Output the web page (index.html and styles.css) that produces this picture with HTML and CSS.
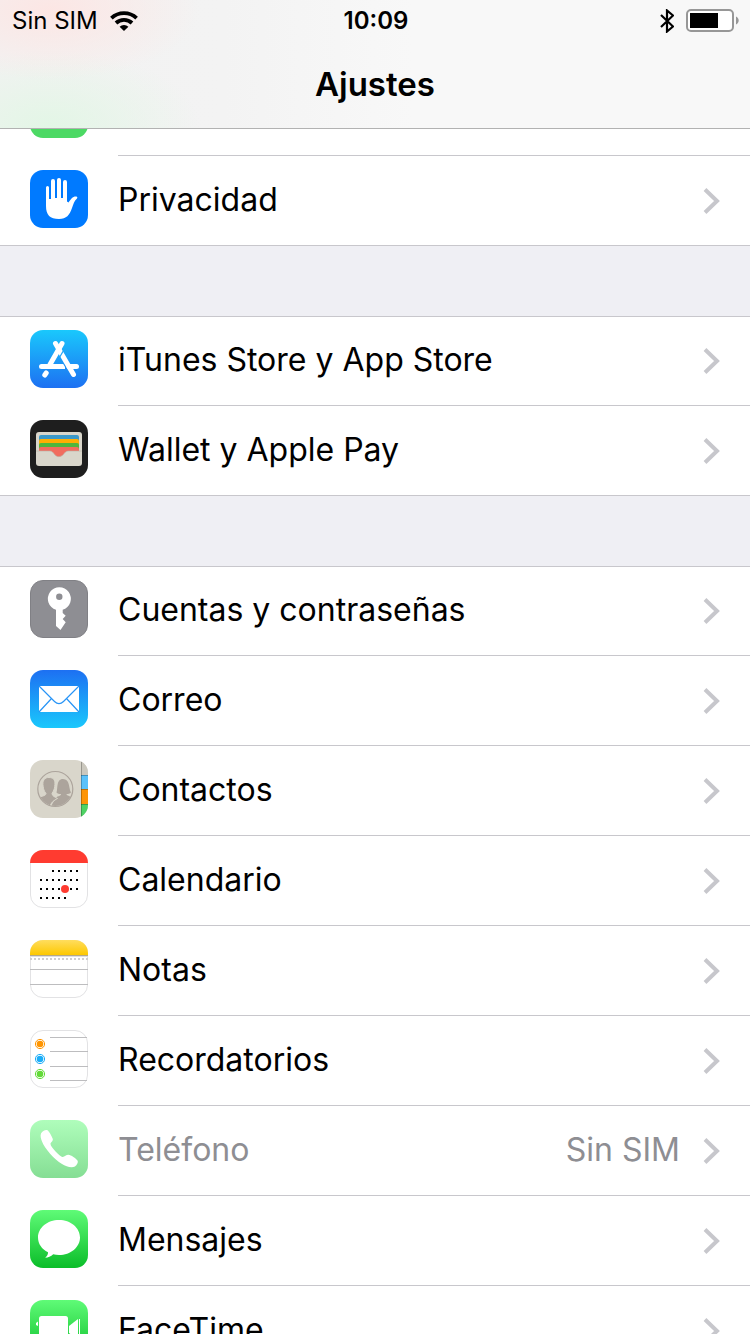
FILE: index.html
```html
<!DOCTYPE html>
<html lang="es">
  <head>
    <meta charset="UTF-8" />
    <meta name="viewport" content="width=device-width, initial-scale=1.0" />
    <title>Ajustes</title>
    <link rel="stylesheet" href="styles.css">
  </head>
  <body>
    <!-- shared shapes -->
    <svg class="defs" aria-hidden="true">
      <defs>
        <symbol id="chevron" viewBox="0 0 18 28">
          <path d="M2 2.5 L14 14 L2 25.5" fill="none" stroke="#c7c7cc" stroke-width="4" />
        </symbol>
        <linearGradient id="blueDown" x1="0" y1="0" x2="0" y2="1">
          <stop offset="0" stop-color="#1ac8fc" />
          <stop offset="1" stop-color="#1d70f2" />
        </linearGradient>
        <linearGradient id="blueUp" x1="0" y1="1" x2="0" y2="0">
          <stop offset="0" stop-color="#1ac8fc" />
          <stop offset="1" stop-color="#1d70f2" />
        </linearGradient>
        <linearGradient id="green" x1="0" y1="0" x2="0" y2="1">
          <stop offset="0" stop-color="#5ffb77" />
          <stop offset="1" stop-color="#0bbd29" />
        </linearGradient>
        <linearGradient id="paleGreen" x1="0" y1="0" x2="0" y2="1">
          <stop offset="0" stop-color="#affdbb" />
          <stop offset="1" stop-color="#85de94" />
        </linearGradient>
        <linearGradient id="yellow" x1="0" y1="0" x2="0" y2="1">
          <stop offset="0" stop-color="#ffdd5e" />
          <stop offset="1" stop-color="#fdc800" />
        </linearGradient>
        <clipPath id="tile"><rect width="58" height="58" rx="13" /></clipPath>
      </defs>
    </svg>

    <div class="screen">
      <header class="header">
        <div class="status">
          <div class="status-left">
            <span>Sin SIM</span>
            <svg class="wifi" viewBox="0 0 28 20">
              <g fill="none" stroke="#000" stroke-width="3.8">
                <path d="M1.4 7.2 A18.4 18.4 0 0 1 26.6 7.2" />
                <path d="M6 12 A11.6 11.6 0 0 1 22 12" />
              </g>
              <path d="M9.6 15.8 A6.2 6.2 0 0 1 18.4 15.8 L14 20 Z" />
            </svg>
          </div>
          <div class="status-time">10:09</div>
          <div class="status-right">
            <svg class="bluetooth" viewBox="0 0 14 24">
              <path d="M1 6 L13 17.5 L7 22.5 V1.5 L13 6.5 L1 18" fill="none" stroke="#000" stroke-width="2.2" />
            </svg>
            <svg class="battery" viewBox="0 0 54 24">
              <rect x="1" y="1" width="46" height="21" rx="4" fill="#fff" stroke="#979797" stroke-width="2" />
              <rect x="4" y="4" width="28" height="15" />
              <path d="M50 7.5 C53.6 9 53.6 14 50 15.5 Z" fill="#979797" />
            </svg>
          </div>
        </div>
        <h1 class="title">Ajustes</h1>
      </header>

      <main class="list">
        <section class="group">
          <div class="row">
            <svg class="icon" viewBox="0 0 58 58"><rect width="58" height="58" rx="13" fill="#4cd964" /></svg>
            <div class="cell"></div>
          </div>
          <a class="row" href="#">
            <svg class="icon" viewBox="0 0 58 58">
              <rect width="58" height="58" rx="13" fill="#007aff" />
              <path fill="#fff" d="M16 17.5 Q16 16 17.5 16 Q19 16 19 17.5 V29 H21 V11 Q21 9 23 9 Q25 9 25 11 V28 H27 V10 Q27 8 29 8 Q31 8 31 10 V28 H33 V12 Q33 10 35 10 Q37 10 37 12 V31.5 L38.5 32.5 C41 29 42.5 26.2 46.5 26.5 Q48 27 47 28.5 C44 31 43.5 34 42 38 C39.5 45 36.5 49 29 49 C20 49 16 45 16 36 Z" />
            </svg>
            <div class="cell"><span class="label">Privacidad</span><svg class="chevron"><use href="#chevron" /></svg></div>
          </a>
        </section>

        <section class="group">
          <a class="row" href="#">
            <svg class="icon" viewBox="0 0 58 58">
              <rect width="58" height="58" rx="13" fill="url(#blueDown)" />
              <g fill="none" stroke="#fff" stroke-width="5" stroke-linecap="round">
                <path d="M25.5 13.5 L43.5 44.5" />
                <path d="M39 36.5 H46.5" />
                <path d="M16.2 43 L14.8 45" />
              </g>
              <path d="M33.5 20.5 L29.5 27.5" fill="none" stroke="#1fa5f9" stroke-width="1.2" />
              <g fill="none" stroke="#fff" stroke-width="5" stroke-linecap="round">
                <path d="M32 13.5 L20 34.5" />
                <path d="M11.5 36.5 H30" />
              </g>
              <path d="M30 34 H33.2 L35 37 V39 H30 Z" fill="#fff" />
            </svg>
            <div class="cell"><span class="label">iTunes Store y App Store</span><svg class="chevron"><use href="#chevron" /></svg></div>
          </a>
          <a class="row" href="#">
            <svg class="icon" viewBox="0 0 58 58">
              <rect width="58" height="58" rx="13" fill="#1e1e1e" />
              <rect x="6" y="12" width="46" height="34" rx="3" fill="#d9d6cb" />
              <path d="M9 31 V17 Q9 15 11 15 H47 Q49 15 49 17 V31 Z" fill="#3b99c9" />
              <path d="M9 31 V21 Q9 19 11 19 H47 Q49 19 49 21 V31 Z" fill="#ffae03" />
              <path d="M9 31 V25 Q9 23 11 23 H47 Q49 23 49 25 V31 Z" fill="#4fb63c" />
              <path d="M9 31 V29 Q9 27 11 27 H47 Q49 27 49 29 V31 H38 C34 31 34 36.7 29 36.7 C24 36.7 24 31 20 31 Z" fill="#f16c5e" />
              <path d="M6 31 H20 C24 31 24 36.7 29 36.7 C34 36.7 34 31 38 31 H52" fill="none" stroke="#b9b2a6" stroke-width="0.6" />
            </svg>
            <div class="cell"><span class="label">Wallet y Apple Pay</span><svg class="chevron"><use href="#chevron" /></svg></div>
          </a>
        </section>

        <section class="group">
          <a class="row" href="#">
            <svg class="icon" viewBox="0 0 58 58">
              <rect x="0.5" y="0.5" width="57" height="57" rx="12.5" fill="#8e8e93" stroke="#808085" />
              <path fill="#fff" fill-rule="evenodd" d="M26 29.8 A11.5 11.5 0 1 1 32.7 29.8 V33 L35.7 35.7 L32.7 39 L35.7 42.3 L30.5 50 L26 46 Z M29.3 13.5 A3.2 3.2 0 1 0 29.3 19.9 A3.2 3.2 0 1 0 29.3 13.5 Z" />
            </svg>
            <div class="cell"><span class="label">Cuentas y contraseñas</span><svg class="chevron"><use href="#chevron" /></svg></div>
          </a>
          <a class="row" href="#">
            <svg class="icon" viewBox="0 0 58 58">
              <rect width="58" height="58" rx="13" fill="url(#blueUp)" />
              <rect x="9" y="16" width="40" height="26" fill="#fff" />
              <g fill="none" stroke="#2794f6" stroke-width="1.2">
                <path d="M9 16 L24.5 31.5 Q29 36 33.5 31.5 L49 16" />
                <path d="M9 42 L21.5 28.5 M49 42 L36.5 28.5" />
              </g>
            </svg>
            <div class="cell"><span class="label">Correo</span><svg class="chevron"><use href="#chevron" /></svg></div>
          </a>
          <a class="row" href="#">
            <svg class="icon" viewBox="0 0 58 58">
              <clipPath id="face"><circle cx="25.3" cy="29" r="17" /></clipPath>
              <g clip-path="url(#tile)">
                <rect width="58" height="58" fill="#d9d6cb" />
                <rect x="51" width="7" height="15" fill="#cbc8be" />
                <rect x="51" y="15" width="7" height="14" fill="#5ac1fa" />
                <rect x="51" y="29" width="7" height="15" fill="#fd9507" />
                <rect x="51" y="44" width="7" height="14" fill="#4ed264" />
                <path d="M51.5 0 V58 M51 15.5 H58 M51 29.5 H58 M51 44.5 H58" stroke="#000" stroke-opacity="0.25" fill="none" />
              </g>
              <g clip-path="url(#face)">
                <path fill="#aca49c" d="M26 37.5 C28 36 31 36 31 34 C29 34 27.5 33.5 26.5 32.5 C28 29 26 19 33 19 C40 19 38.5 28 41 32.5 C40 34 38 34 36.5 34 C36.5 36.5 44 36 44 41 V48 H20 Z" />
                <path fill="#aca49c" stroke="#d9d6cb" stroke-width="1" d="M6 49 V39 C9 36 16 36.5 16 33.5 C14 31 13.5 29 13.2 26.5 C12 21 14.5 17.2 19 17.5 C24.5 17.5 25.5 21 24.7 26.5 C24.5 29 23.5 31 22 33.5 C22 36 25 37 27.5 38.5 C24 40.5 21 42 20 47 Z" />
              </g>
              <circle cx="25.3" cy="29" r="17.5" fill="none" stroke="#aca49c" stroke-width="1.2" />
            </svg>
            <div class="cell"><span class="label">Contactos</span><svg class="chevron"><use href="#chevron" /></svg></div>
          </a>
          <a class="row" href="#">
            <svg class="icon" viewBox="0 0 58 58">
              <rect x="0.5" y="0.5" width="57" height="57" rx="12.5" fill="#fff" stroke="#e2e2e4" />
              <rect width="58" height="13" fill="#ff3b30" clip-path="url(#tile)" />
              <g stroke="#000" stroke-width="2" stroke-dasharray="2 4" fill="none">
                <path d="M22 21 H48" />
                <path d="M10 30 H48" />
                <path d="M10 39 H48" />
                <path d="M10 48 H36" />
              </g>
              <circle cx="35" cy="39" r="4" fill="#ff3b30" />
            </svg>
            <div class="cell"><span class="label">Calendario</span><svg class="chevron"><use href="#chevron" /></svg></div>
          </a>
          <a class="row" href="#">
            <svg class="icon" viewBox="0 0 58 58">
              <rect x="0.5" y="0.5" width="57" height="57" rx="12.5" fill="#fff" stroke="#e2e2e4" />
              <rect width="58" height="15" fill="url(#yellow)" clip-path="url(#tile)" />
              <path d="M0 15.5 H58" stroke="#b3a988" fill="none" />
              <path d="M0 16.5 H58" stroke="#dedee2" fill="none" />
              <path d="M0 19 H58" stroke="#cfcfcf" stroke-width="2" stroke-dasharray="2 2" fill="none" />
              <path d="M0 29.5 H58 M0 44.5 H58" stroke="#bdbdbf" fill="none" />
            </svg>
            <div class="cell"><span class="label">Notas</span><svg class="chevron"><use href="#chevron" /></svg></div>
          </a>
          <a class="row" href="#">
            <svg class="icon" viewBox="0 0 58 58">
              <rect x="0.5" y="0.5" width="57" height="57" rx="12.5" fill="#fff" stroke="#e2e2e4" />
              <path d="M20 7.5 H57 M20 21.5 H58 M20 36.5 H58 M20 50.5 H57" stroke="#bdbdbf" fill="none" />
              <g fill="#ff9500"><circle cx="10" cy="14" r="3.3" /><circle cx="10" cy="14" r="4.6" fill="none" stroke="#ff9500" /></g>
              <g fill="#1badf8"><circle cx="10" cy="29" r="3.3" /><circle cx="10" cy="29" r="4.6" fill="none" stroke="#1badf8" /></g>
              <g fill="#63da38"><circle cx="10" cy="44" r="3.3" /><circle cx="10" cy="44" r="4.6" fill="none" stroke="#63da38" /></g>
            </svg>
            <div class="cell"><span class="label">Recordatorios</span><svg class="chevron"><use href="#chevron" /></svg></div>
          </a>
          <a class="row disabled" href="#">
            <svg class="icon" viewBox="0 0 58 58">
              <rect width="58" height="58" rx="13" fill="url(#paleGreen)" />
              <path fill="#fff" d="M11 13.5 C12.5 11 15.5 9.5 17.5 10.3 C19 11.5 22 16.5 22.8 19 C23.2 21.5 20.5 22 20.5 24 C20.5 27 30 36.7 32.5 37 C34.5 37.2 36 34.8 38.5 34.8 C41 35 46 38.5 47.5 40.5 C48.5 42 47 45 45 46.5 C41.5 48.5 36 46.5 32 44 C24 39 15 29 12 21.5 C11 19 10 16 11 13.5 Z" />
            </svg>
            <div class="cell"><span class="label">Teléfono</span><span class="value">Sin SIM</span><svg class="chevron"><use href="#chevron" /></svg></div>
          </a>
          <a class="row" href="#">
            <svg class="icon" viewBox="0 0 58 58">
              <rect width="58" height="58" rx="13" fill="url(#green)" />
              <path fill="#fff" d="M29 10 C40.6 10 50 17.7 50 27.5 C50 37.2 40.6 45 29 45 C27 45 25 44.8 23.2 44.3 C21 46.5 18 47.7 15.2 47.7 C17 46.2 18.2 44.5 18 42.3 C11.8 39.2 8 33.8 8 27.5 C8 17.7 17.4 10 29 10 Z" />
            </svg>
            <div class="cell"><span class="label">Mensajes</span><svg class="chevron"><use href="#chevron" /></svg></div>
          </a>
          <a class="row" href="#">
            <svg class="icon" viewBox="0 0 58 58">
              <rect width="58" height="58" rx="13" fill="url(#green)" />
              <g fill="#fff">
                <rect x="9" y="16" width="29" height="27" rx="2.5" />
                <path d="M39 26 L48 19 V40 L39 33 Z" />
                <rect x="49" y="19" width="1" height="21" />
                <path d="M8 21.5 L6 23 V25 L8 26 Z" />
              </g>
            </svg>
            <div class="cell"><span class="label">FaceTime</span><svg class="chevron"><use href="#chevron" /></svg></div>
          </a>
        </section>
      </main>
    </div>
  </body>
</html>
```

FILE: styles.css
```css
* {
  box-sizing: border-box;
}
body {
  margin: 0;
  font-family: Inter, "Liberation Sans", sans-serif;
  color: #000;
  background-color: #efeff4;
}
.defs {
  position: absolute;
  width: 0;
  height: 0;
}
.screen {
  position: relative;
  height: 100vh;
  overflow: hidden;
}

.header {
  position: absolute;
  top: 0;
  left: 0;
  right: 0;
  height: 129px;
  border-bottom: 1px solid #b2b2b2;
  background:
    radial-gradient(ellipse 150px 70px at 50px 10px, #fce6e4, rgba(252, 230, 228, 0)),
    radial-gradient(ellipse 150px 75px at 50px 125px, #e3f6e6, rgba(227, 246, 230, 0)),
    linear-gradient(90deg, #f2f2f2, #f3f3f3 30%, #f8f8f8 55%);
}
.status {
  display: grid;
  grid-template-columns: 1fr auto 1fr;
  align-items: center;
  height: 41px;
  padding: 0 10px 0 12px;
  font-size: 24px;
  line-height: 41px;
}
.status-left,
.status-right {
  display: flex;
  align-items: center;
}
.status-left {
  gap: 12px;
}
.status-right {
  justify-content: flex-end;
  gap: 12px;
}
.status-time {
  font-weight: 600;
}
.wifi {
  width: 28px;
  height: 20px;
}
.bluetooth {
  width: 14px;
  height: 24px;
}
.battery {
  width: 54px;
  height: 24px;
}
.title {
  margin: 0;
  padding-top: 21px;
  font-size: 33px;
  font-weight: 600;
  line-height: 44px;
  text-align: center;
}

.list {
  height: 100%;
  padding-top: 66px;
  overflow-y: auto;
  scrollbar-width: none;
}
.group {
  margin-bottom: 70px;
  background-color: #fff;
  box-shadow: inset 0 1px #c8c7cc, inset 0 -1px #c8c7cc;
}
.row {
  display: flex;
  gap: 30px;
  height: 90px;
  padding-left: 30px;
  color: #000;
  text-decoration: none;
}
.icon {
  flex: none;
  width: 58px;
  height: 58px;
  margin-top: 14px;
}
.cell {
  display: flex;
  flex: 1;
  align-items: center;
  gap: 23px;
  padding-right: 29px;
  border-bottom: 1px solid #c8c7cc;
  font-size: 32px;
  line-height: 44px;
}
.row:last-child .cell {
  border-bottom-color: transparent;
}
.label {
  flex: 1;
}
.label,
.value {
  padding-bottom: 2px;
}
.chevron {
  flex: none;
  width: 18px;
  height: 28px;
}
.disabled .label,
.value {
  color: #8e8e93;
}
```
